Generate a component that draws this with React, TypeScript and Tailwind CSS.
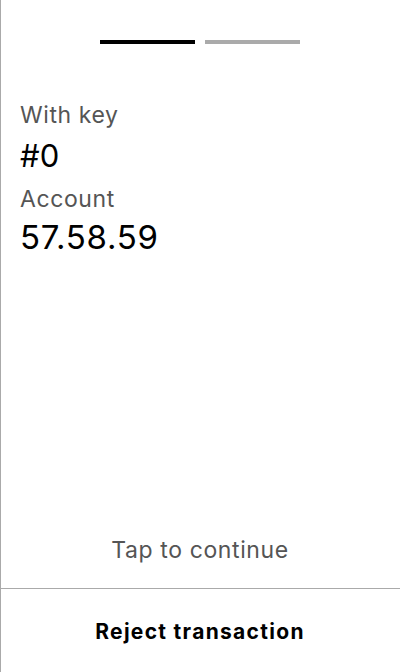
export default function App() {
  return (
    <div
      className="flex h-[672px] w-[400px] flex-col bg-white text-black shadow-[inset_1px_0_0_#aaaaaa]"
      style={{ fontFamily: "Inter, 'Noto Sans', sans-serif" }}
    >
      {/* step indicator */}
      <div className="flex justify-center gap-[10px] pt-[40px]">
        <div className="h-[4px] w-[95px] bg-black" />
        <div className="h-[4px] w-[95px] bg-[#aaaaaa]" />
      </div>

      <div className="flex flex-col px-[20px] pt-[56px]">
        <span className="text-[23px] leading-[30px] tracking-[0.6px] text-[#555555]">With key</span>
        <span className="mt-[6px] text-[31px] leading-[40px]">#0</span>
        <span className="mt-[8px] text-[23px] leading-[30px] tracking-[0.6px] text-[#555555]">Account</span>
        <span className="mt-[3px] text-[33px] leading-[40px] tracking-[0.7px]">57.58.59</span>
      </div>

      <div className="flex-1" />

      <div className="pb-[23px] text-center text-[23px] leading-[30px] tracking-[0.6px] text-[#555555]">
        Tap to continue
      </div>

      <button
        type="button"
        className="flex h-[84px] w-full items-center justify-center border-t border-[#aaaaaa] pt-[3px] text-[21px] font-bold tracking-[1.3px] text-black"
      >
        Reject transaction
      </button>
    </div>
  );
}
